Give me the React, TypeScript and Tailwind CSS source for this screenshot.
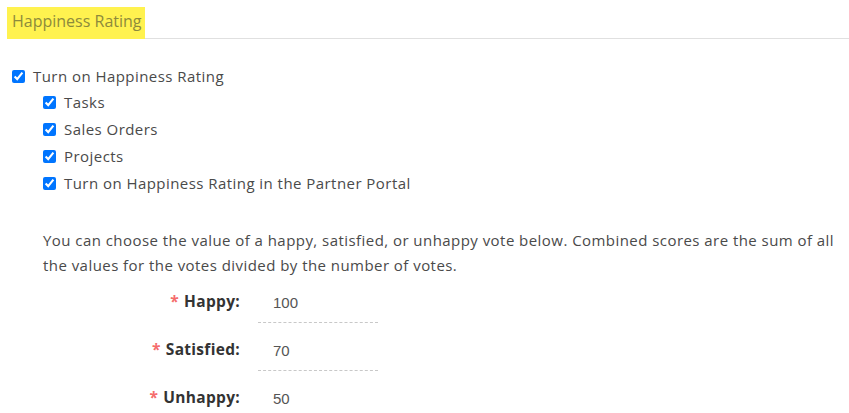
import React from 'react';

const font = { fontFamily: '"Open Sans", "Noto Sans", sans-serif' };

const Check: React.FC<{ label: string; className?: string }> = ({ label, className }) => (
    <label className={`flex items-center h-[27px] text-[15px] tracking-[0.45px] text-[#4a4a4a] ${className || ''}`}>
        <input type="checkbox" defaultChecked className="w-[13px] h-[13px] m-0 accent-[#0075ff]" />
        <span className="ml-[8px]">{label}</span>
    </label>
);

const Field: React.FC<{ label: string; value: string; last?: boolean }> = ({ label, value, last }) => (
    <div className="flex items-start h-[48px]">
        <div className="w-[240px] text-right text-[15.5px] tracking-[0.3px] font-bold text-[#333] pt-[1px]">
            <span className="text-[#f56c6c] mr-[5px]">*</span>
            {label}
        </div>
        <div className="ml-[18px] w-[120px]">
            <div
                className={`pl-[15px] h-[34px] text-[15px] text-[#555] pt-[3px] ${last ? '' : 'border-b border-dashed border-[#c8c8c8]'}`}
                style={{ fontFamily: '"Liberation Sans", Arial, sans-serif' }}
            >
                {value}
            </div>
        </div>
    </div>
);

export default function App() {
    return (
        <div className="w-[849px] h-[413px] bg-white overflow-hidden" style={font}>
            <div className="pl-[12px] pt-[7px]">
                <div className="h-[32px] border-b border-[#e0e0e0]">
                    <span className="inline-block -ml-[5px] pl-[5px] pr-[3px] h-[32px] pt-[2px] bg-[#fff24f] text-[16px] text-[#8d8a3c]">
                        Happiness Rating
                    </span>
                </div>

                <div className="mt-[24px]">
                    <Check label="Turn on Happiness Rating" />
                    <div className="pl-[31px] -mt-[1px]">
                        <Check label="Tasks" />
                        <Check label="Sales Orders" />
                        <Check label="Projects" />
                        <Check label="Turn on Happiness Rating in the Partner Portal" />
                    </div>
                </div>

                <p className="pl-[31px] mt-[31px] text-[15px] tracking-[0.45px] leading-[25px] text-[#4a4a4a] pr-[4px]">
                    You can choose the value of a happy, satisfied, or unhappy vote below. Combined scores are the sum of all
                    the values for the votes divided by the number of votes.
                </p>

                <div className="-ml-[12px] mt-[11px]">
                    <Field label="Happy:" value="100" />
                    <Field label="Satisfied:" value="70" />
                    <Field label="Unhappy:" value="50" last />
                </div>
            </div>
        </div>
    );
}
